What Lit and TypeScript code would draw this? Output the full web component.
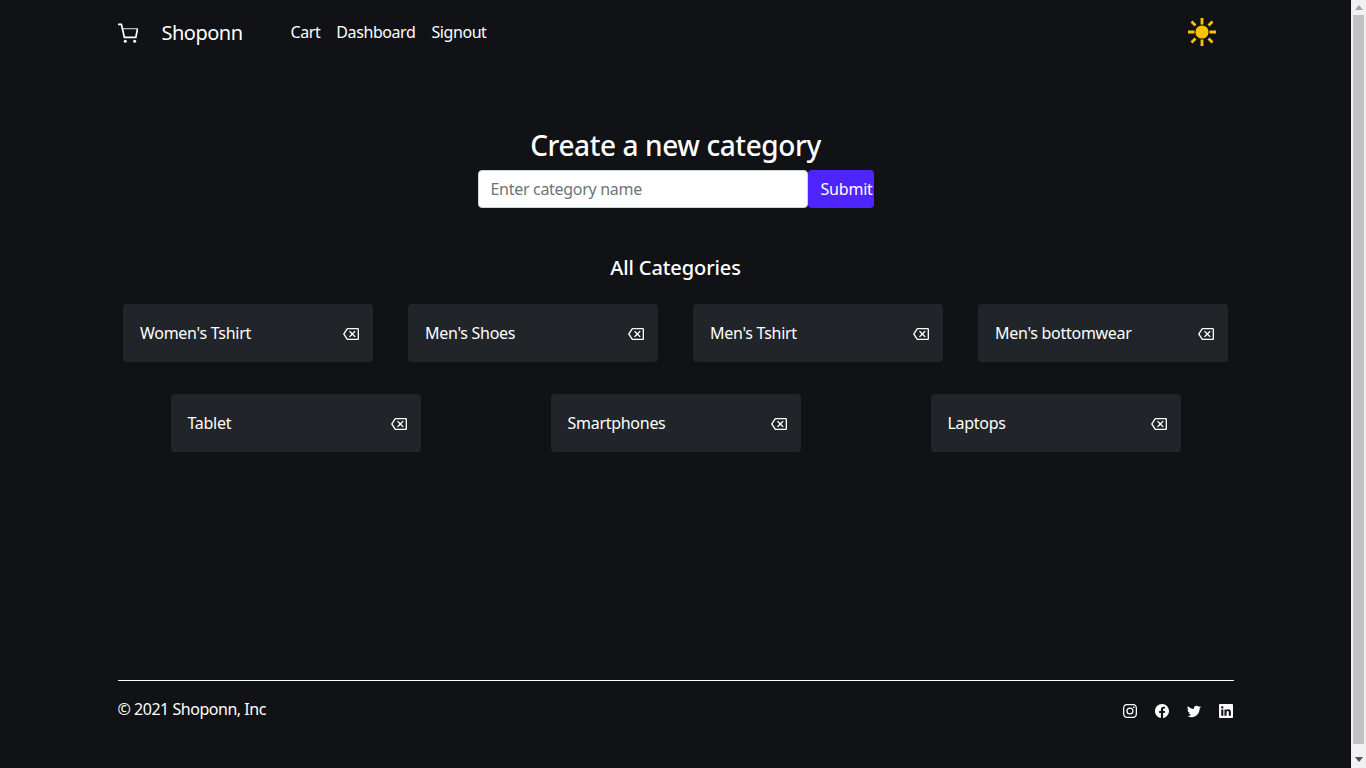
import { LitElement, html, css, svg } from 'lit';
import { customElement, property } from 'lit/decorators.js';

const ICONS = {
  backspace: svg`<g transform="scale(.6667)"><path d="M22 3H7c-.69 0-1.230.35-1.590.88L0 12l5.410 8.110c.36.53.9.89 1.590.89h15c1.100 0 2-.9 2-2V5c0-1.100-.9-2-2-2zm0 16H7.070L2.400 12l4.660-7H22v14zm-11.590-2L14 13.410 17.590 17 19 15.590 15.410 12 19 8.410 17.590 7 14 10.590 10.410 7 9 8.410 12.590 12 9 15.590z"/></g>`,
  instagram: svg`<path d="M8 0C5.829 0 5.556.01 4.703.048 3.85.088 3.269.222 2.76.42a3.917 3.917 0 0 0-1.417.923A3.927 3.927 0 0 0 .42 2.76C.222 3.268.087 3.85.048 4.7.01 5.555 0 5.827 0 8.001c0 2.172.01 2.444.048 3.297.04.852.174 1.433.372 1.942.205.526.478.972.923 1.417.444.445.89.719 1.416.923.51.198 1.09.333 1.942.372C5.555 15.99 5.827 16 8 16s2.444-.01 3.298-.048c.851-.04 1.434-.174 1.943-.372a3.916 3.916 0 0 0 1.416-.923c.445-.445.718-.891.923-1.417.197-.509.332-1.09.372-1.942C15.99 10.445 16 10.173 16 8s-.01-2.445-.048-3.299c-.04-.851-.175-1.433-.372-1.941a3.926 3.926 0 0 0-.923-1.417A3.911 3.911 0 0 0 13.24.42c-.51-.198-1.092-.333-1.943-.372C10.443.01 10.172 0 7.998 0h.003zm-.717 1.442h.718c2.136 0 2.389.007 3.232.046.78.035 1.204.166 1.486.275.373.145.64.319.92.599.28.28.453.546.598.92.11.281.24.705.275 1.485.039.843.047 1.096.047 3.231s-.008 2.389-.047 3.232c-.035.78-.166 1.203-.275 1.485a2.47 2.47 0 0 1-.599.919c-.28.28-.546.453-.92.598-.28.11-.704.24-1.485.276-.843.038-1.096.047-3.232.047s-2.39-.009-3.233-.047c-.78-.036-1.203-.166-1.485-.276a2.478 2.478 0 0 1-.92-.598 2.48 2.48 0 0 1-.6-.92c-.109-.281-.24-.705-.275-1.485-.038-.843-.046-1.096-.046-3.233 0-2.136.008-2.388.046-3.231.036-.78.166-1.204.276-1.486.145-.373.319-.64.599-.92.28-.28.546-.453.92-.598.282-.11.705-.24 1.485-.276.738-.034 1.024-.044 2.515-.045v.002zm4.988 1.328a.96.96 0 1 0 0 1.92.96.96 0 0 0 0-1.92zm-4.27 1.122a4.109 4.109 0 1 0 0 8.217 4.109 4.109 0 0 0 0-8.217zm0 1.441a2.667 2.667 0 1 1 0 5.334 2.667 2.667 0 0 1 0-5.334z"/>`,
  facebook: svg`<path d="M16 8.049c0-4.446-3.582-8.05-8-8.05C3.58 0-.002 3.603-.002 8.05c0 4.017 2.926 7.347 6.75 7.951v-5.625h-2.03V8.05H6.75V6.275c0-2.017 1.195-3.131 3.022-3.131.876 0 1.791.157 1.791.157v1.98h-1.009c-.993 0-1.303.621-1.303 1.258v1.51h2.218l-.354 2.326H9.25V16c3.824-.604 6.75-3.934 6.75-7.951z"/>`,
  twitter: svg`<path d="M5.026 15c6.038 0 9.341-5.003 9.341-9.334 0-.14 0-.282-.006-.422A6.685 6.685 0 0 0 16 3.542a6.658 6.658 0 0 1-1.889.518 3.301 3.301 0 0 0 1.447-1.817 6.533 6.533 0 0 1-2.087.793A3.286 3.286 0 0 0 7.875 6.03a9.325 9.325 0 0 1-6.767-3.429 3.289 3.289 0 0 0 1.018 4.382A3.323 3.323 0 0 1 .64 6.575v.045a3.288 3.288 0 0 0 2.632 3.218 3.203 3.203 0 0 1-.865.115 3.23 3.23 0 0 1-.614-.057 3.283 3.283 0 0 0 3.067 2.277A6.588 6.588 0 0 1 .78 13.58a6.32 6.32 0 0 1-.78-.045A9.344 9.344 0 0 0 5.026 15z"/>`,
  linkedin: svg`<path d="M0 1.146C0 .513.526 0 1.175 0h13.65C15.474 0 16 .513 16 1.146v13.708c0 .633-.526 1.146-1.175 1.146H1.175C.526 16 0 15.487 0 14.854V1.146zm4.943 12.248V6.169H2.542v7.225h2.401zm-1.2-8.212c.837 0 1.358-.554 1.358-1.248-.015-.709-.52-1.248-1.342-1.248-.822 0-1.359.54-1.359 1.248 0 .694.521 1.248 1.327 1.248h.016zm4.908 8.212V9.359c0-.216.016-.432.08-.586.173-.431.568-.878 1.232-.878.869 0 1.216.662 1.216 1.634v3.865h2.401V9.25c0-2.22-1.184-3.252-2.764-3.252-1.274 0-1.845.7-2.165 1.193v.025h-.016a5.54 5.54 0 0 1 .016-.025V6.169h-2.4c.03.678 0 7.225 0 7.225h2.4z"/>`,
};

const CATEGORIES = ["Women's Tshirt", "Men's Shoes", "Men's Tshirt", "Men's bottomwear", 'Tablet', 'Smartphones', 'Laptops'];

@customElement('bs-icon')
class BsIcon extends LitElement {
  static styles = css`
    :host {
      display: inline-flex;
    }
    svg {
      display: block;
      fill: currentColor;
    }
  `;

  @property() name: keyof typeof ICONS = 'backspace';
  @property({ type: Number }) size = 16;

  render() {
    return html`<svg width=${this.size} height=${this.size} viewBox="0 0 16 16">${ICONS[this.name]}</svg>`;
  }
}

@customElement('app-root')
class AppRoot extends LitElement {
  static styles = css`
    :host {
      display: flex;
      height: 768px;
      overflow: hidden;
      background: #101215;
      color: #fff;
      font-family: 'Noto Sans', sans-serif;
      font-size: 16px;
    }

    .page {
      flex: 1;
      min-width: 0;
    }

    /* the reference shows the classic browser scrollbar, headless chrome does not draw one */
    .scrollbar {
      display: flex;
      flex-direction: column;
      align-items: center;
      width: 15px;
      background: #f1f1f1;
    }

    .scrollbar__arrow {
      display: block;
      flex: none;
      margin: 5px 0;
    }

    .scrollbar__arrow--down {
      margin: auto 0 6px;
    }

    .scrollbar__thumb {
      box-sizing: border-box;
      width: 11px;
      height: 729px;
      background: #c1c1c1;
    }

    .container {
      box-sizing: border-box;
      width: 1140px;
      margin: 0 auto;
      padding: 0 12px;
    }

    .nav {
      display: flex;
      align-items: center;
      height: 64px;
    }

    .nav__cart {
      display: block;
      margin-right: 24px;
      margin-top: 2px;
    }

    .nav__brand {
      font-size: 20px;
      margin-right: 48px;
      letter-spacing: -0.5px;
    }

    .nav__links {
      display: flex;
      gap: 16px;
      flex: 1;
      letter-spacing: -0.42px;
    }

    .nav__sun {
      display: block;
      margin-right: 16px;
    }

    .create {
      display: flex;
      flex-direction: column;
      align-items: center;
      padding-top: 61px;
    }

    .create__title {
      margin: 0 0 5px;
      font-size: 28px;
      line-height: 40px;
      font-weight: 500;
      letter-spacing: -0.4px;
    }

    .create__form {
      display: flex;
    }

    .create__input {
      box-sizing: border-box;
      width: 330px;
      height: 38px;
      padding: 6px 12px;
      border: 1px solid #ced4da;
      border-radius: 4px;
      background: #fff;
      font: inherit;
      letter-spacing: -0.3px;
      color: #212529;
    }

    .create__input::placeholder {
      color: #6c757d;
      opacity: 1;
    }

    .create__submit {
      box-sizing: border-box;
      width: 66px;
      height: 38px;
      padding: 0 0 0 13px;
      border: 0;
      border-radius: 4px;
      background: #4e24ff;
      color: #fff;
      font: inherit;
      letter-spacing: -0.2px;
      text-align: left;
      white-space: nowrap;
      overflow: hidden;
    }

    .all-title {
      margin: 46px 0 22px;
      text-align: center;
      font-size: 20px;
      line-height: 28px;
      font-weight: 500;
      letter-spacing: -0.1px;
    }

    .grid {
      display: flex;
      flex-wrap: wrap;
      justify-content: space-around;
      row-gap: 32px;
      margin: 0 -12px;
    }

    .card {
      box-sizing: border-box;
      display: flex;
      align-items: center;
      justify-content: space-between;
      width: 250px;
      height: 58px;
      padding: 0 14px 0 17px;
      border-radius: 4px;
      background: #212529;
      letter-spacing: -0.28px;
    }

    .card__delete {
      margin-top: 2px;
    }

    .footer {
      display: flex;
      justify-content: space-between;
      margin-top: 228px;
      padding: 16px 0;
      border-top: 1px solid #fff;
    }

    .footer__copy {
      letter-spacing: -0.47px;
      line-height: 24px;
    }

    .footer__icons {
      display: flex;
      align-items: flex-start;
      gap: 18px;
      padding: 7px 1px 0 0;
    }
  `;

  render() {
    return html`
      <div class="page">
        <div class="container">
          <nav class="nav">
            <svg class="nav__cart" width="20" height="20" viewBox="0 0 20 20" fill="none" stroke="#fff">
              <path stroke-width="1.700" d="M0 1.300H3.400L6.400 14.400H17.800L19.500 6"></path>
              <path stroke-width="1.100" stroke-opacity=".8" d="M4.300 5.700H20"></path>
              <circle cx="7.300" cy="18.300" r="1.500" fill="#fff" stroke="none"></circle>
              <circle cx="16.700" cy="18.300" r="1.500" fill="#fff" stroke="none"></circle>
            </svg>
            <span class="nav__brand">Shoponn</span>
            <div class="nav__links">
              <span>Cart</span>
              <span>Dashboard</span>
              <span>Signout</span>
            </div>
            <svg class="nav__sun" width="32" height="32" viewBox="0 0 32 32" fill="#ffc107" stroke="#ffc107">
              <circle cx="16" cy="16" r="6.600" stroke="none"></circle>
              <g stroke-width="2.800">
                <path d="M16 2v6.500M16 23.500V30M2 16h6.500M23.500 16H30M5.500 5.500l4 4M22.500 22.500l4 4M5.500 26.500l4-4M22.500 9.500l4-4"></path>
              </g>
            </svg>
          </nav>

          <section class="create">
            <h1 class="create__title">Create a new category</h1>
            <form class="create__form">
              <input class="create__input" placeholder="Enter category name" />
              <button class="create__submit" type="button">Submit</button>
            </form>
          </section>

          <h2 class="all-title">All Categories</h2>
          <div class="grid">
            ${CATEGORIES.map(
              (c) => html`
                <div class="card">
                  <span>${c}</span>
                  <bs-icon class="card__delete" name="backspace"></bs-icon>
                </div>
              `,
            )}
          </div>

          <footer class="footer">
            <span class="footer__copy">© 2021 Shoponn, Inc</span>
            <div class="footer__icons">
              <bs-icon name="instagram" size="14"></bs-icon>
              <bs-icon name="facebook" size="14"></bs-icon>
              <bs-icon name="twitter" size="14"></bs-icon>
              <bs-icon name="linkedin" size="14"></bs-icon>
            </div>
          </footer>
        </div>
      </div>
      <div class="scrollbar">
        <svg class="scrollbar__arrow" width="8" height="5" viewBox="0 0 8 5" fill="#a3a3a3"><path d="M4 0L8 5H0z"></path></svg>
        <div class="scrollbar__thumb"></div>
        <svg class="scrollbar__arrow scrollbar__arrow--down" width="8" height="5" viewBox="0 0 8 5" fill="#505050"><path d="M0 0h8L4 5z"></path></svg>
      </div>
    `;
  }
}
